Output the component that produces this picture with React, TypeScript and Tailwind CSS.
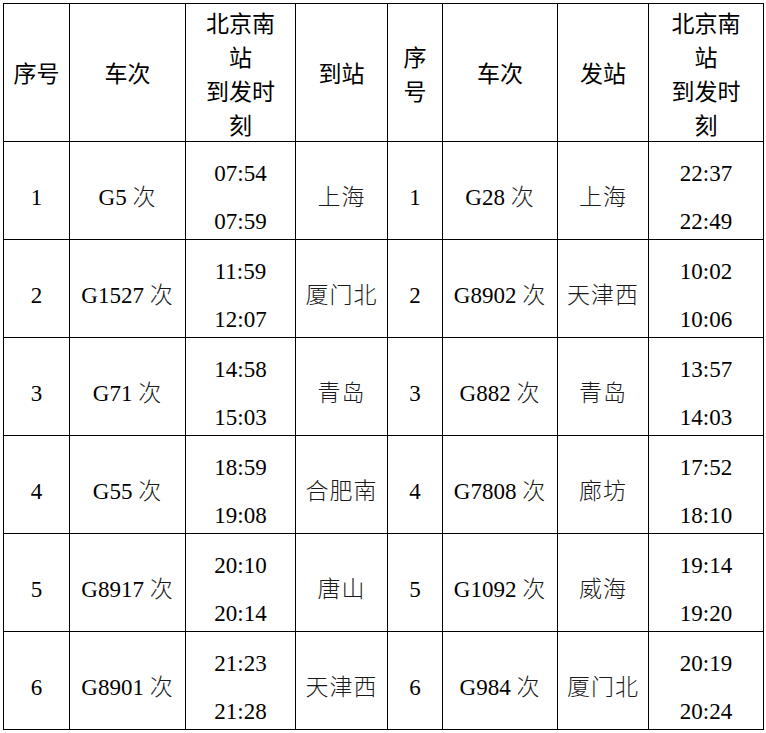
import React from 'react';

type Row = {
  no: number;
  arrTrain: string;
  arrTimes: [string, string];
  arrTo: string;
  depTrain: string;
  depFrom: string;
  depTimes: [string, string];
};

const ROWS: Row[] = [
  { no: 1, arrTrain: 'G5', arrTimes: ['07:54', '07:59'], arrTo: '上海', depTrain: 'G28', depFrom: '上海', depTimes: ['22:37', '22:49'] },
  { no: 2, arrTrain: 'G1527', arrTimes: ['11:59', '12:07'], arrTo: '厦门北', depTrain: 'G8902', depFrom: '天津西', depTimes: ['10:02', '10:06'] },
  { no: 3, arrTrain: 'G71', arrTimes: ['14:58', '15:03'], arrTo: '青岛', depTrain: 'G882', depFrom: '青岛', depTimes: ['13:57', '14:03'] },
  { no: 4, arrTrain: 'G55', arrTimes: ['18:59', '19:08'], arrTo: '合肥南', depTrain: 'G7808', depFrom: '廊坊', depTimes: ['17:52', '18:10'] },
  { no: 5, arrTrain: 'G8917', arrTimes: ['20:10', '20:14'], arrTo: '唐山', depTrain: 'G1092', depFrom: '威海', depTimes: ['19:14', '19:20'] },
  { no: 6, arrTrain: 'G8901', arrTimes: ['21:23', '21:28'], arrTo: '天津西', depTrain: 'G984', depFrom: '厦门北', depTimes: ['20:19', '20:24'] },
];

const COLS = [66, 116, 110, 92, 55, 115, 91, 115];

const th = 'border border-black text-center align-middle font-normal p-0';
const td = 'border border-black text-center align-middle p-0 pt-[14px] leading-[30px]';
const cjk = 'tracking-[1px] font-light text-[#1a1a1a]';

function Train({ code }: { code: string }) {
  return (
    <span>
      {code} <span className={cjk}>次</span>
    </span>
  );
}

function Times({ t }: { t: [string, string] }) {
  return (
    <div className="flex flex-col items-center gap-[18px] leading-[30px]">
      <span>{t[0]}</span>
      <span>{t[1]}</span>
    </div>
  );
}

const HeadTime = () => (
  <div className="leading-[34px]">
    北京南
    <br />站<br />
    到发时
    <br />刻
  </div>
);

export default function App() {
  return (
    <div className="bg-white w-[766px] h-[733px] pl-[3px] pt-[3px]">
      <table
        className="table-fixed border-collapse text-black text-[23px]"
        style={{ width: 760 }}
      >
        <colgroup>
          {COLS.map((w, i) => (
            <col key={i} style={{ width: w }} />
          ))}
        </colgroup>
        <thead>
          <tr
            className="h-[138px]"
            style={{ fontFamily: '"Noto Sans CJK SC", "Liberation Sans", sans-serif' }}
          >
            <th className={th}>序号</th>
            <th className={th}>车次</th>
            <th className={th}>
              <HeadTime />
            </th>
            <th className={th}>到站</th>
            <th className={th}>
              <div className="leading-[34px]">
                序<br />号
              </div>
            </th>
            <th className={th}>车次</th>
            <th className={th}>发站</th>
            <th className={th}>
              <HeadTime />
            </th>
          </tr>
        </thead>
        <tbody style={{ fontFamily: '"Liberation Serif", "Noto Sans CJK SC", serif' }}>
          {ROWS.map((r) => (
            <tr key={r.no} className="h-[98px]">
              <td className={td}>{r.no}</td>
              <td className={td}>
                <Train code={r.arrTrain} />
              </td>
              <td className={td}>
                <Times t={r.arrTimes} />
              </td>
              <td className={td}>
                <span className={cjk}>{r.arrTo}</span>
              </td>
              <td className={td}>{r.no}</td>
              <td className={td}>
                <Train code={r.depTrain} />
              </td>
              <td className={td}>
                <span className={cjk}>{r.depFrom}</span>
              </td>
              <td className={td}>
                <Times t={r.depTimes} />
              </td>
            </tr>
          ))}
        </tbody>
      </table>
    </div>
  );
}
